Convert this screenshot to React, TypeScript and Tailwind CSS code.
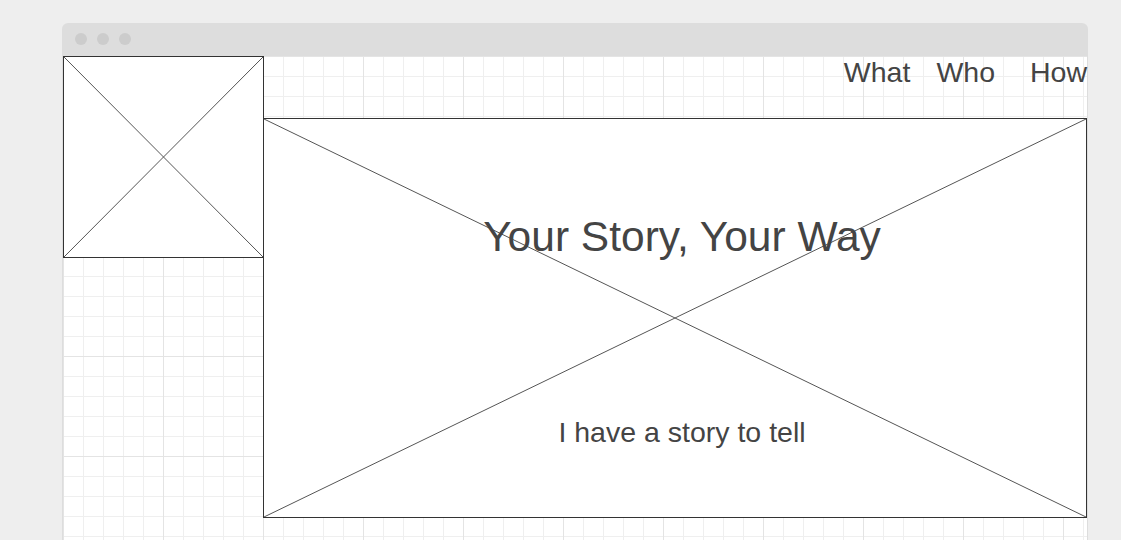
import React from 'react';

const font = { fontFamily: '"Liberation Sans", Arial, sans-serif' };

// placeholder box with an X drawn corner to corner
const Cross = () => (
  <svg className="absolute inset-0 h-full w-full" preserveAspectRatio="none" viewBox="0 0 100 100">
    <line x1="0" y1="0" x2="100" y2="100" stroke="#555" strokeWidth="1" vectorEffect="non-scaling-stroke" />
    <line x1="100" y1="0" x2="0" y2="100" stroke="#555" strokeWidth="1" vectorEffect="non-scaling-stroke" />
  </svg>
);

const App = () => {
  return (
    <div className="min-h-[540px] h-[540px] overflow-hidden bg-[#eeeeee] pt-[23px] pl-[62px]" style={font}>
      <div className="w-[1026px] h-[517px] flex flex-col">
        {/* title bar */}
        <div className="h-[33px] rounded-t-[6px] bg-[#dddddd] flex items-center gap-[10px] pl-[13px] pb-[1px]">
          <span className="w-3 h-3 rounded-full bg-[#cccccc]" />
          <span className="w-3 h-3 rounded-full bg-[#cccccc]" />
          <span className="w-3 h-3 rounded-full bg-[#cccccc]" />
        </div>

        {/* canvas */}
        <div className="flex-1 border-x border-[#dddddd] bg-white bg-[linear-gradient(to_right,#e4e4e4_1px,transparent_1px),linear-gradient(to_bottom,#e4e4e4_1px,transparent_1px),linear-gradient(to_right,#efefef_1px,transparent_1px),linear-gradient(to_bottom,#efefef_1px,transparent_1px)] bg-[size:100px_100px,100px_100px,20px_20px,20px_20px]">
          <div className="flex">
            {/* logo */}
            <div className="relative w-[201px] h-[202px] border border-[#333333] bg-white shrink-0">
              <Cross />
            </div>

            <div className="flex-1 flex flex-col">
              {/* nav */}
              <div className="h-[62px] flex justify-end items-start pt-[2px] text-[28.5px] leading-none text-[#444444]">
                <span className="mr-[26px]">What</span>
                <span className="mr-[35px]">Who</span>
                <span>How</span>
              </div>

              {/* hero */}
              <div className="relative -ml-px h-[400px] border border-[#333333] bg-white">
                <Cross />
                <div className="relative flex flex-col items-center pl-[14px] text-[#444444]">
                  <h1 className="mt-[97px] text-[42.5px] leading-none">Your Story, Your Way</h1>
                  <p className="mt-[159px] text-[28.5px] leading-none">I have a story to tell</p>
                </div>
              </div>
            </div>
          </div>
        </div>
      </div>
    </div>
  );
};

export default App;
